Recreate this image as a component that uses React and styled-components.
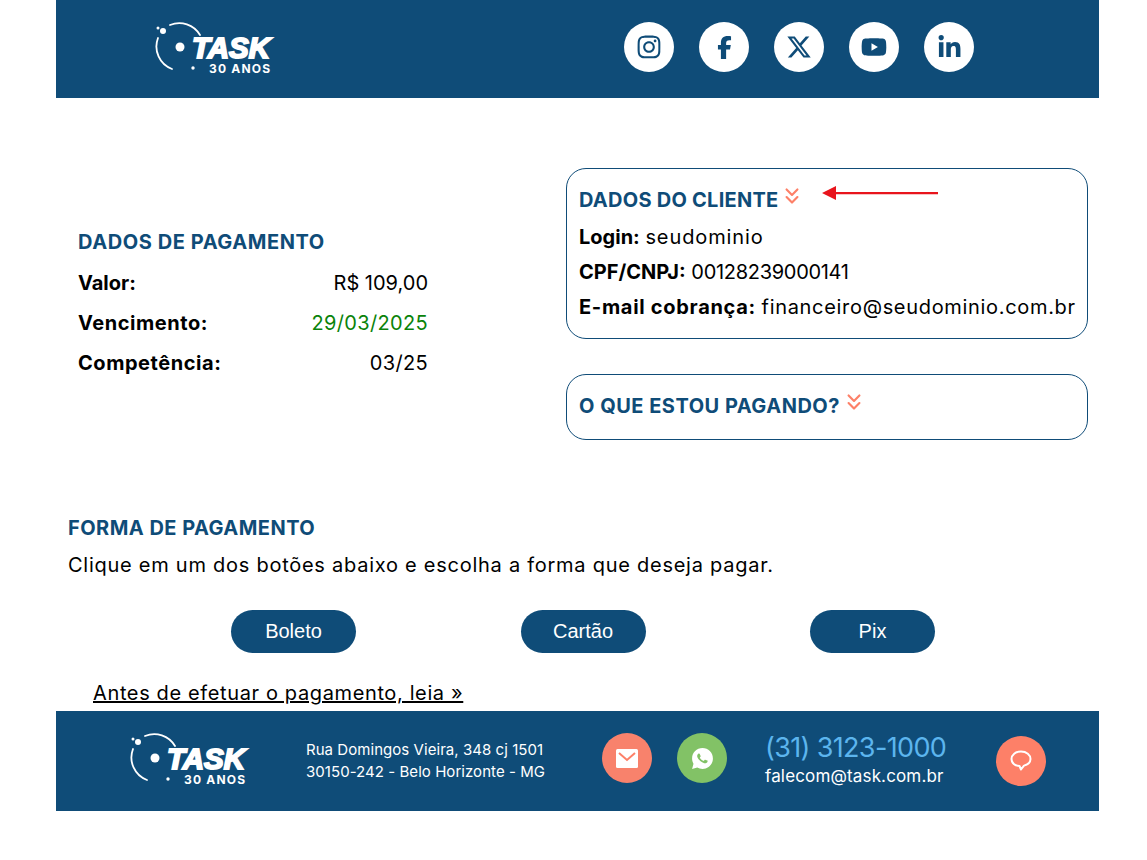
import React from 'react';
import styled, { createGlobalStyle } from 'styled-components';
import { ChevronsDown } from 'lucide-react';
import { FaInstagram, FaFacebookF, FaXTwitter, FaYoutube, FaLinkedinIn } from 'react-icons/fa6';
import { RiWhatsappFill } from 'react-icons/ri';

const BLUE = '#0f4c78';
const CORAL = '#fd8068';

const GlobalStyle = createGlobalStyle`
  html, body {
    margin: 0;
    padding: 0;
    background: #fff;
    color: #000;
    font-family: Inter, "Open Sans", sans-serif;
  }
`;

const Page = styled.div`
  width: 1043px;
  margin-left: 56px;
  height: 860px;
`;

const Header = styled.header`
  box-sizing: border-box;
  height: 98px;
  background: ${BLUE};
  display: flex;
  align-items: flex-start;
  padding: 22px 0 0 99px;
`;

const Socials = styled.div`
  display: flex;
  gap: 25px;
  margin-left: 347px;
`;

const Circle = styled.a`
  width: 50px;
  height: 50px;
  border-radius: 50%;
  flex: none;
  display: flex;
  align-items: center;
  justify-content: center;
  background: ${(p) => p.$bg || '#fff'};
  color: ${(p) => p.$fg || BLUE};
  font-size: ${(p) => p.$size || 24}px;
`;

const ChatCircle = styled(Circle)`
  margin-top: 3px;
`;

const LogoSvg = styled.svg`
  display: block;
  flex: none;
`;

const TopRow = styled.section`
  display: flex;
  align-items: center;
  padding: 70px 11px 0 22px;
  justify-content: space-between;
`;

const Summary = styled.div`
  width: 350px;
  padding-top: 3px;
`;

const Heading = styled.h2`
  margin: 0 0 ${(p) => p.$below || 0}px;
  font-size: 20px;
  line-height: 28px;
  font-weight: 700;
  color: ${BLUE};
  letter-spacing: ${(p) => p.$spacing || 0.5}px;
`;

const SummaryRow = styled.div`
  display: flex;
  justify-content: space-between;
  font-size: 20px;
  line-height: 40px;
`;

const Label = styled.span`
  font-weight: 700;
  letter-spacing: ${(p) => p.$spacing || 0}px;
`;

const Value = styled.span`
  color: ${(p) => p.$color || '#000'};
  letter-spacing: ${(p) => p.$spacing || 0}px;
`;

const Cards = styled.div`
  position: relative;
  width: 522px;
  display: flex;
  flex-direction: column;
  gap: 35px;
`;

const Card = styled.div`
  box-sizing: border-box;
  height: ${(p) => p.$height}px;
  border: 1px solid ${BLUE};
  border-radius: 20px;
  padding: 17px 12px 0 12px;
`;

const CardTitle = styled.div`
  display: flex;
  align-items: flex-start;
  gap: 1px;
  margin-bottom: 6px;
  color: ${CORAL};

  svg {
    margin-top: -3px;
  }
`;

const CardLine = styled.div`
  font-size: 20px;
  line-height: 35px;
  white-space: nowrap;
`;

const Arrow = styled.svg`
  position: absolute;
  left: 255px;
  top: 17px;
`;

const Payment = styled.section`
  padding: 74px 0 0 12px;
`;

const Hint = styled.p`
  margin: 8px 0 0;
  font-size: 20px;
  line-height: 30px;
  letter-spacing: 0.74px;
  white-space: nowrap;
`;

const Buttons = styled.div`
  display: flex;
  gap: 164.5px;
  margin: 30px 0 0 163px;
`;

const PayButton = styled.button`
  width: 125px;
  height: 43px;
  border: 0;
  border-radius: 22px;
  background: ${BLUE};
  color: #fff;
  font-family: "Liberation Sans", Arial, sans-serif;
  font-size: 20px;
`;

const ReadFirst = styled.a`
  display: inline-block;
  margin: 26px 0 0 25px;
  font-size: 20px;
  line-height: 28px;
  color: #000;
  text-decoration: underline;
  letter-spacing: 0.63px;
`;

const Footer = styled.footer`
  box-sizing: border-box;
  height: 100px;
  margin-top: 4px;
  background: ${BLUE};
  color: #fff;
  display: flex;
  align-items: flex-start;
  padding: 22px 0 0 74px;
`;

const Address = styled.div`
  margin: 6px 0 0 54px;
  width: 296px;
  font-size: 15px;
  line-height: 22px;
  white-space: nowrap;
  letter-spacing: 0.05px;
`;

const FooterIcons = styled.div`
  display: flex;
  gap: 25px;
`;

const Contact = styled.div`
  margin: -3px 0 0 38px;
  width: 231px;
`;

const Phone = styled.div`
  font-size: 27px;
  line-height: 36px;
  color: #5cb5ee;
  letter-spacing: -0.65px;
`;

const Email = styled.div`
  font-size: 17px;
  line-height: 20px;
  letter-spacing: 0.15px;
`;

function Logo() {
  return (
    <LogoSvg width="122" height="58" viewBox="0 0 122 58">
      <path d="M3 16 A24 24 0 0 0 17 47" fill="none" stroke="#fff" strokeWidth="1.8" strokeLinecap="round" />
      <path d="M15 3 A24 24 0 0 1 45 13" fill="none" stroke="#fff" strokeWidth="1.8" strokeLinecap="round" />
      <circle cx="3" cy="6" r="1.5" fill="#fff" />
      <circle cx="8" cy="9" r="3" fill="#fff" />
      <circle cx="25" cy="25" r="4.5" fill="#fff" />
      <circle cx="38" cy="46" r="1.7" fill="#fff" />
      <text
        x="37"
        y="36"
        fontFamily="Liberation Sans"
        fontWeight="700"
        fontStyle="italic"
        fontSize="30"
        fill="#fff"
        stroke="#fff"
        strokeWidth="2"
        textLength="78"
        lengthAdjust="spacingAndGlyphs"
      >
        TASK
      </text>
      <text
        x="54"
        y="51"
        fontFamily="Inter"
        fontWeight="700"
        fontSize="12"
        fill="#fff"
        textLength="61"
      >
        30 ANOS
      </text>
    </LogoSvg>
  );
}

function MailIcon() {
  return (
    <svg width="22" height="19" viewBox="0 0 22 19">
      <rect width="22" height="19" rx="1.5" fill="#fff" />
      <path d="M3 4 L11 11 L19 4" fill="none" stroke={CORAL} strokeWidth="2" />
    </svg>
  );
}

function ChatIcon() {
  return (
    <svg width="22" height="22" viewBox="0 0 22 22">
      <path
        d="M11 1.5 C5.5 1.5 1.5 4.8 1.5 9 C1.5 13 5 15.8 9.5 16 L11 19.5 L14 15.6 C18 14.5 20.5 12 20.5 9 C20.5 4.8 16.5 1.5 11 1.5 Z"
        fill="none"
        stroke="#fff"
        strokeWidth="2"
        strokeLinejoin="round"
      />
    </svg>
  );
}

export default function App() {
  return (
    <Page>
      <GlobalStyle />
      <Header>
        <Logo />
        <Socials>
          <Circle $size={26}><FaInstagram /></Circle>
          <Circle $size={23}><FaFacebookF /></Circle>
          <Circle $size={26}><FaXTwitter /></Circle>
          <Circle $size={26}><FaYoutube /></Circle>
          <Circle $size={25}><FaLinkedinIn /></Circle>
        </Socials>
      </Header>

      <TopRow>
        <Summary>
          <Heading $spacing={0.58} $below={7}>DADOS DE PAGAMENTO</Heading>
          <SummaryRow><Label>Valor:</Label><Value>R$ 109,00</Value></SummaryRow>
          <SummaryRow><Label $spacing={0.55}>Vencimento:</Label><Value $color="#0a830a" $spacing={0.34}>29/03/2025</Value></SummaryRow>
          <SummaryRow><Label $spacing={0.55}>Competência:</Label><Value $spacing={0.34}>03/25</Value></SummaryRow>
        </Summary>
        <Cards>
          <Card $height={171}>
            <CardTitle>
              <Heading $spacing={0.25}>DADOS DO CLIENTE</Heading>
              <ChevronsDown size={26} strokeWidth={2} />
            </CardTitle>
            <CardLine><Label>Login:</Label> <Value $spacing={0.9}>seudominio</Value></CardLine>
            <CardLine><Label>CPF/CNPJ:</Label> <Value $spacing={-0.3}>00128239000141</Value></CardLine>
            <CardLine><Label $spacing={0.7}>E-mail cobrança:</Label> <Value $spacing={0.68}>financeiro@seudominio.com.br</Value></CardLine>
          </Card>
          <Card $height={66}>
            <CardTitle>
              <Heading>O QUE ESTOU PAGANDO?</Heading>
              <ChevronsDown size={26} strokeWidth={2} />
            </CardTitle>
          </Card>
          <Arrow width="118" height="16" viewBox="0 0 118 16">
            <path d="M1 8 L15 1 L15 7 L117 7 L117 9.2 L15 9.2 L15 15 Z" fill="#e8141c" />
          </Arrow>
        </Cards>
      </TopRow>

      <Payment>
        <Heading $spacing={0.47}>FORMA DE PAGAMENTO</Heading>
        <Hint>Clique em um dos botões abaixo e escolha a forma que deseja pagar.</Hint>
        <Buttons>
          <PayButton>Boleto</PayButton>
          <PayButton>Cartão</PayButton>
          <PayButton>Pix</PayButton>
        </Buttons>
        <ReadFirst href="#">Antes de efetuar o pagamento, leia »</ReadFirst>
      </Payment>

      <Footer>
        <Logo />
        <Address>
          Rua Domingos Vieira, 348 cj 1501
          <br />
          30150-242 - Belo Horizonte - MG
        </Address>
        <FooterIcons>
          <Circle $bg="#f8826c" $fg="#fff"><MailIcon /></Circle>
          <Circle $bg="#82c266" $fg="#fff" $size={25}><RiWhatsappFill /></Circle>
        </FooterIcons>
        <Contact>
          <Phone>(31) 3123-1000</Phone>
          <Email>falecom@task.com.br</Email>
        </Contact>
        <ChatCircle $bg={CORAL} $fg="#fff"><ChatIcon /></ChatCircle>
      </Footer>
    </Page>
  );
}
